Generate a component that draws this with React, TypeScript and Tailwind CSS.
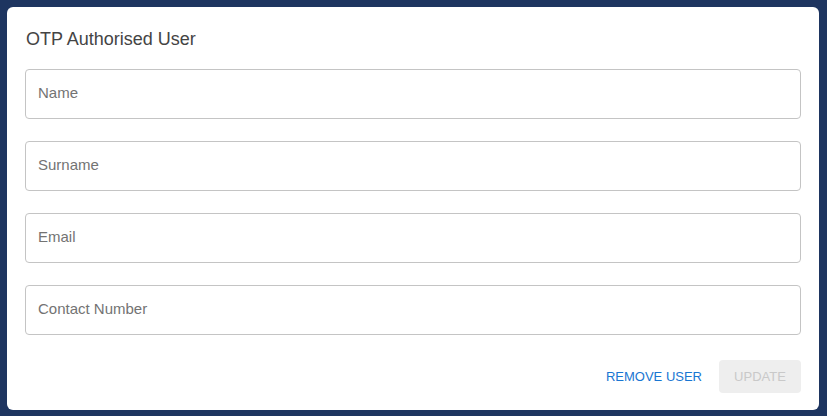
export default function App() {
  const fields = ["Name", "Surname", "Email", "Contact Number"];
  return (
    <div className="w-[827px] h-[416px] bg-[#1e3560] pt-[7px] pl-[7px]" style={{ fontFamily: '"Liberation Sans", Arial, sans-serif' }}>
      <div className="w-[812px] h-[403px] bg-white rounded-[6px] px-[18px] pt-[20px]">
        <div className="text-[18px] leading-[24px] text-[#444444] pl-[1px]">OTP Authorised User</div>
        <div className="mt-[18px] flex flex-col gap-[22px]">
          {fields.map((f) => (
            <div key={f} className="h-[50px] w-[776px] border border-[#c4c4c4] rounded-[4px] flex items-center pl-[12px] text-[15px] leading-[18px] text-[#737373] pb-[3px]">
              {f}
            </div>
          ))}
        </div>
        <div className="mt-[25px] flex justify-end items-center w-[776px]">
          <button className="text-[13px] text-[#1976d2] px-[8px] h-[33px] mr-[8px] pl-[7px] pr-[9px]">REMOVE USER</button>
          <button className="w-[82px] h-[33px] rounded-[4px] bg-[#eeeeee] text-[13px] text-[#c9c9c9]">UPDATE</button>
        </div>
      </div>
    </div>
  );
}
